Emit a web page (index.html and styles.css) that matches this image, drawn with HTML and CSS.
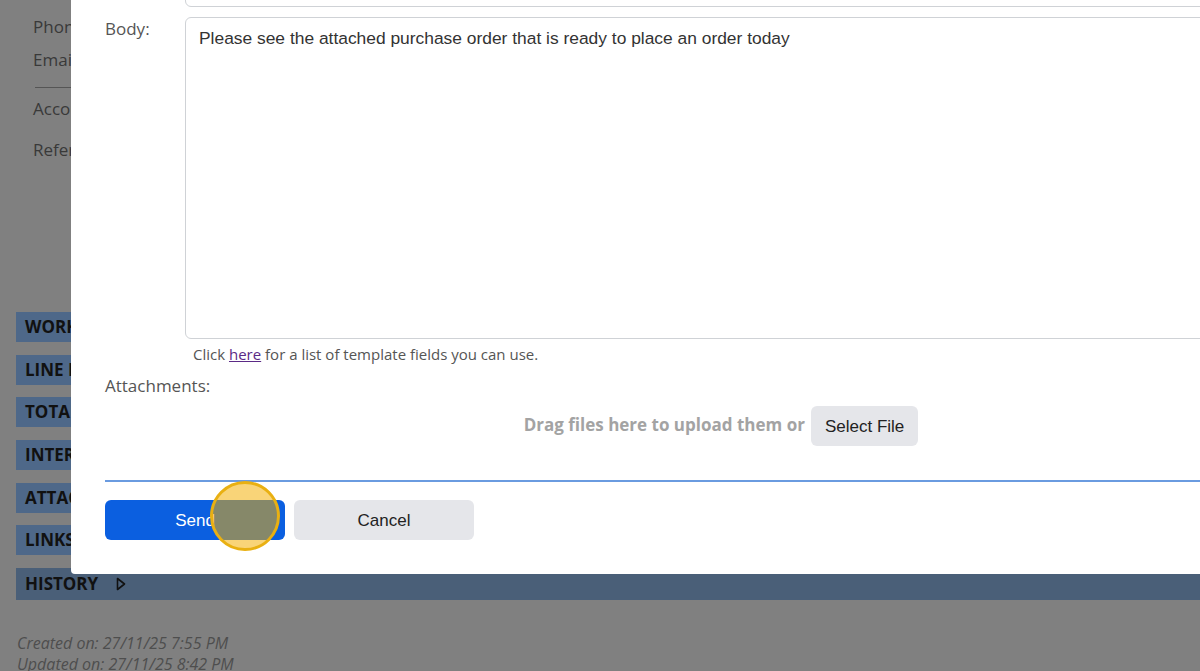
FILE: index.html
```html
<!DOCTYPE html>
<html lang="en">
<head>
  <meta name="viewport" content="width=device-width, initial-scale=1">
  <link rel="stylesheet" href="styles.css">
</head>
<body>

  <!-- page behind the dialog (dimmed) -->
  <div class="page">
    <div class="contact">
      <div class="contact-row">Phone</div>
      <div class="contact-row">Email</div>
      <hr class="contact-rule">
      <div class="contact-row account">Account</div>
      <div class="contact-row ref">Reference</div>
    </div>

    <div class="sections">
      <div class="section-bar">WORK ORDERS</div>
      <div class="section-bar">LINE ITEMS</div>
      <div class="section-bar">TOTALS</div>
      <div class="section-bar">INTERNAL NOTES</div>
      <div class="section-bar">ATTACHMENTS</div>
      <div class="section-bar">LINKS</div>
      <div class="section-bar history">HISTORY
        <svg class="caret" width="10" height="14" viewBox="0 0 10 14">
          <path d="M1.5 1.5 L8.5 7 L1.5 12.5 Z" fill="none" stroke="#111" stroke-width="1.6" stroke-linejoin="round"/>
        </svg>
      </div>
    </div>

    <div class="stamps">
      <div>Created on: 27/11/25 7:55 PM</div>
      <div>Updated on: 27/11/25 8:42 PM</div>
    </div>
  </div>

  <!-- email dialog -->
  <div class="modal">
    <div class="field-row subject-row">
      <div class="field-label"></div>
      <div class="field-input subject-input"></div>
    </div>

    <div class="field-row">
      <div class="field-label">Body:</div>
      <div class="field-body">
        <div class="field-input body-input">Please see the attached purchase order that is ready to place an order today</div>
        <div class="hint">Click <a href="#" class="hint-link">here</a> for a list of template fields you can use.</div>
      </div>
    </div>

    <div class="attach-label">Attachments:</div>
    <div class="dropzone">
      <span class="drop-text">Drag files here to upload them or</span>
      <button class="btn btn-grey select-btn">Select File</button>
    </div>

    <div class="modal-footer">
      <button class="btn btn-blue">Send</button>
      <button class="btn btn-grey">Cancel</button>
    </div>
  </div>

  <div class="click-ring"></div>

</body>
</html>
```

FILE: styles.css
```css
:root {
  --page-bg: #808080;
  --page-text: #393939;
  --bar-bg: #4e6889;
  --bar-history-bg: #4a5f78;
  --bar-text: #111111;
  --label-color: #555555;
  --input-border: #cfd2d6;
  --blue: #0b5fe0;
  --grey-btn: #e5e6ea;
  --rule-blue: #6a9be0;
}

* {
  box-sizing: border-box;
}

html, body {
  height: 100%;
}

body {
  margin: 0;
  background-color: var(--page-bg);
  font-family: "Open Sans", "Liberation Sans", sans-serif;
  overflow: hidden;
  position: relative;
}

/* ---- page behind ---- */

.page {
  padding: 10px 0 0 16px;
}

.contact {
  padding-left: 17px;
  color: var(--page-text);
  font-size: 17px;
}

.contact-row {
  height: 33px;
  line-height: 33px;
}

.contact-rule {
  border: 0;
  border-top: 1px solid #555;
  margin: 11px 0 0 2px;
}

.contact-row.account {
  margin-top: 4px;
}

.contact-row.ref {
  margin-top: 8px;
}

.sections {
  margin-top: 146px;
  display: flex;
  flex-direction: column;
  gap: 12.7px;
}

.section-bar {
  height: 30px;
  line-height: 30px;
  padding-left: 9px;
  background-color: var(--bar-bg);
  color: var(--bar-text);
  font-weight: 700;
  font-size: 17px;
  display: flex;
  align-items: center;
}

.section-bar.history {
  height: 32px;
  background-color: var(--bar-history-bg);
}

.caret {
  margin-left: 18px;
}

.stamps {
  margin-top: 33px;
  padding-left: 1px;
  font-style: italic;
  font-size: 16px;
  color: #4e4e4e;
  line-height: 21px;
}

/* ---- dialog ---- */

.modal {
  position: absolute;
  left: 71px;
  top: -60px;
  width: 1220px;
  background: #fff;
  border-radius: 4px;
  padding: 27px 0 34px 34px;
}

.field-row {
  display: flex;
}

.subject-row {
  margin-bottom: 10px;
}

.field-label {
  width: 80px;
  flex-shrink: 0;
  font-size: 17px;
  line-height: 24px;
  color: var(--label-color);
}

.field-body {
  width: 1072px;
}

.field-input {
  border: 1px solid var(--input-border);
  border-radius: 6px;
  background: #fff;
}

.subject-input {
  width: 1072px;
  height: 40px;
}

.body-input {
  height: 322px;
  padding: 9px 13px;
  font-family: "Liberation Sans", Arial, sans-serif;
  font-size: 17.4px;
  line-height: 22px;
  color: #333;
}

.hint {
  margin: 5px 0 0 8px;
  font-size: 15px;
  line-height: 20px;
  color: var(--label-color);
}

.hint-link {
  color: #5b2a86;
}

.attach-label {
  margin-top: 10px;
  font-size: 17px;
  line-height: 24px;
  color: var(--label-color);
}

.dropzone {
  margin: 8px 0 0 80px;
  width: 1072px;
  height: 40px;
  display: flex;
  justify-content: center;
  align-items: center;
  gap: 6px;
}

.drop-text {
  font-weight: 700;
  font-size: 17px;
  line-height: 20px;
  margin-top: -3px;
  color: #a3a3a3;
}

.btn {
  border: 0;
  border-radius: 6px;
  height: 40px;
  font-family: "Liberation Sans", Arial, sans-serif;
  font-size: 17px;
  padding-top: 2px;
  cursor: pointer;
}

.btn-grey {
  background-color: var(--grey-btn);
  color: #222;
}

.btn-blue {
  background-color: var(--blue);
  color: #fff;
}

.select-btn {
  padding: 2px 14px 0;
}

.modal-footer {
  margin-top: 34px;
  border-top: 2px solid var(--rule-blue);
  padding-top: 18px;
  display: flex;
  gap: 9px;
}

.modal-footer .btn {
  width: 180px;
}

/* click highlight from the screen recording */
.click-ring {
  position: absolute;
  left: 210px;
  top: 481px;
  width: 70px;
  height: 70px;
  border-radius: 50%;
  border: 3px solid #e9b012;
  background: rgba(244, 173, 0, 0.53);
}
```
